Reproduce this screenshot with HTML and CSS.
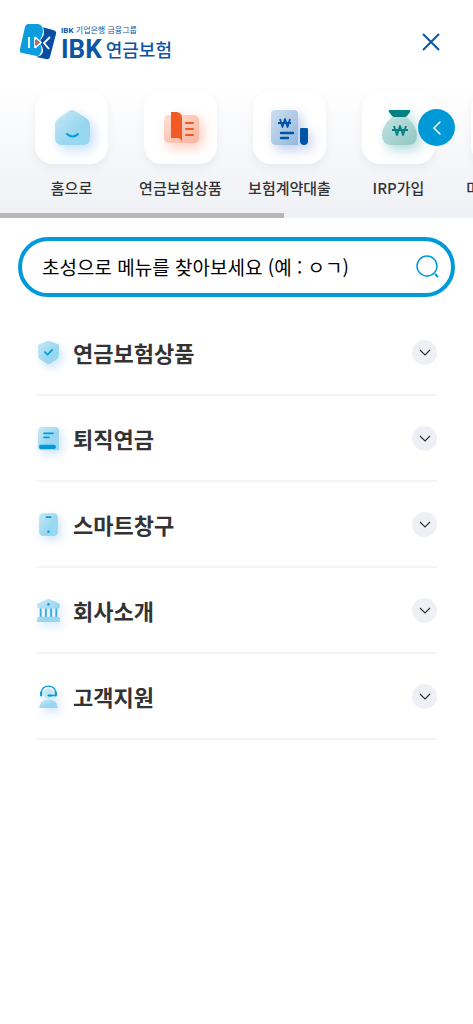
FILE: index.html
```html
<!DOCTYPE html>
<html lang="ko">
<head>
  <meta charset="UTF-8" />
  <title>IBK 연금보험</title>
  <meta name="viewport" content="width=device-width, initial-scale=1" />
  <link rel="stylesheet" href="styles.css">
</head>
<body>
  <header class="header">
    <a class="logo" href="#">
      <svg class="logo-mark" viewBox="0 0 38 38" aria-hidden="true">
        <path d="M9 1h10q5 1 5 7c0 5-3 7-3 11s3 6 1 10c-1 3-2 4-4 4L3 30q-3-1-2-4L6 4q1-3 3-3z" fill="#0b9ddd"/>
        <path d="M23 4l11 3q4 1 3 4l-6 23q-1 3-4 2l-10-2c5-1 7-3 7-7s-3-5-3-8 4-5 4-9-1-5-1-6z" fill="#0b4da2"/>
        <path d="M10 14v11M16 14v11" fill="none" stroke="#fff" stroke-width="1.800"/>
        <path d="M16 14l6 5.500-6 5.500" fill="none" stroke="#fff" stroke-width="1.500"/>
        <path d="M16 16.500l4 3-4 3z" fill="#f15a29"/>
        <path d="M31 14l-6 6 5 6" fill="none" stroke="#fff" stroke-width="1.800"/>
      </svg>
      <span class="logo-text">
        <span class="logo-group"><b>IBK</b> 기업은행 금융그룹</span>
        <span class="logo-name"><b>IBK</b> 연금보험</span>
      </span>
    </a>
    <button class="close-btn" aria-label="닫기">
      <svg width="18" height="18" viewBox="0 0 18 18" fill="none" stroke="#0b55a5" stroke-width="2"><path d="M1 1l16 16M17 1L1 17"/></svg>
    </button>
  </header>

  <nav class="quick">
    <div class="quick-list">
      <a class="quick-item" href="#">
        <span class="tile">
          <svg class="shadow-blue" width="40" height="40" viewBox="0 0 40 40">
            <defs>
              <linearGradient id="sky" x1="0" y1="0" x2="1" y2="1"><stop offset="0" stop-color="#c9e9f5"/><stop offset=".6" stop-color="#98d7f0"/></linearGradient>
            </defs>
            <path d="M17 3q3-2 6 0l11 7q4 3 4 7v13q0 7-7 7H10q-7 0-7-7V17q0-4 4-7z" fill="url(#sky)"/>
            <path d="M15 26q6 5 11 0" fill="none" stroke="#0099dc" stroke-width="2" stroke-linecap="round"/>
          </svg>
        </span>
        <span class="quick-label">홈으로</span>
      </a>
      <a class="quick-item" href="#">
        <span class="tile">
          <svg class="shadow-red" width="40" height="40" viewBox="0 0 40 40">
            <defs>
              <linearGradient id="peach" x1="0" y1="0" x2="1" y2="1"><stop offset="0" stop-color="#fddfd4"/><stop offset="1" stop-color="#f9b39d"/></linearGradient>
            </defs>
            <rect x="3" y="7" width="35" height="28" rx="5" fill="url(#peach)"/>
            <path d="M10 4h6q5 1 5 6v25q0-4-4-5h-7z" fill="#f15a24"/>
            <path d="M25 15h7M25 21h7M25 27h7" stroke="#f15a24" stroke-width="2" stroke-linecap="round"/>
          </svg>
        </span>
        <span class="quick-label">연금보험상품</span>
      </a>
      <a class="quick-item" href="#">
        <span class="tile">
          <svg class="shadow-navy" width="40" height="40" viewBox="0 0 40 40">
            <defs>
              <linearGradient id="steel" x1="0" y1="0" x2="1" y2="1"><stop offset="0" stop-color="#cddff0"/><stop offset="1" stop-color="#94b7da"/></linearGradient>
            </defs>
            <path d="M5 2h19q4 0 4 4v31H6q-5 0-5-5V6q0-4 4-4z" fill="url(#steel)"/>
            <path d="M31 20h6q1 0 1 1v12q0 4-4 4t-4-4V21q0-1 1-1z" fill="#0054a6"/>
            <path d="M10 11l2.500 8 2.500-8 2.500 8 2.500-8M8 15h13" fill="none" stroke="#0054a6" stroke-width="1.800" stroke-linejoin="round"/>
            <path d="M11 25h12M11 30h7" stroke="#0054a6" stroke-width="2.400" stroke-linecap="round"/>
          </svg>
        </span>
        <span class="quick-label">보험계약대출</span>
      </a>
      <a class="quick-item" href="#">
        <span class="tile">
          <svg class="shadow-teal" width="40" height="40" viewBox="0 0 40 40">
            <defs>
              <linearGradient id="mint" x1="0" y1="0" x2="1" y2="1"><stop offset="0" stop-color="#c5e3e0"/><stop offset="1" stop-color="#8ec6c2"/></linearGradient>
            </defs>
            <path d="M13 9h14q11 9 11 18 0 10-10 10H13Q3 37 3 27q0-9 10-18z" fill="url(#mint)"/>
            <path d="M11 2h19q2 0 1 2l-3 4q-1 1-2 1H15q-1 0-2-1l-3-4q-1-2 1-2z" fill="#008080"/>
            <path d="M15 18l3 9 3-9 3 9 3-9M13 22h16" fill="none" stroke="#008080" stroke-width="1.800" stroke-linejoin="round"/>
          </svg>
        </span>
        <span class="quick-label">IRP가입</span>
      </a>
      <a class="quick-item" href="#">
        <span class="tile"></span>
        <span class="quick-label">미청구보험금</span>
      </a>
    </div>
    <button class="quick-prev" aria-label="이전">
      <svg width="10" height="16" viewBox="0 0 10 16" fill="none" stroke="#fff" stroke-width="1.500" stroke-linecap="round"><path d="M8 2L2 8l6 6"/></svg>
    </button>
    <div class="quick-track"><div class="quick-thumb"></div></div>
  </nav>

  <main>
    <form class="search">
      <input type="text" id="keyword" aria-label="메뉴 검색" placeholder="초성으로 메뉴를 찾아보세요 (예 : ㅇㄱ)" />
      <button class="search-btn" type="button" aria-label="검색">
        <svg width="24" height="24" viewBox="0 0 24 24" fill="none" stroke="#0099dc" stroke-width="1.500"><circle cx="11" cy="11" r="10"/><path d="M19 19l3 3" stroke-width="2"/></svg>
      </button>
    </form>

    <ul class="menu">
      <li>
        <button class="menu-btn">
          <svg class="menu-icon" viewBox="0 0 24 24">
            <path d="M11 1q1-.500 2 0l8 3q1 .500 1 2v8q0 4-4 6l-5 3q-1 .500-2 0l-5-3q-4-2-4-6V6q0-1.500 1-2z" fill="url(#sky)"/>
            <path d="M8 11l3 3 5-5" fill="none" stroke="#0099dc" stroke-width="1.500"/>
          </svg>
          <span class="menu-name">연금보험상품</span>
          <span class="arrow"><svg width="12" height="8" viewBox="0 0 12 8"><path d="M1 2l5 5 5-5"/></svg></span>
        </button>
      </li>
      <li>
        <button class="menu-btn">
          <svg class="menu-icon" viewBox="0 0 24 24">
            <path d="M6 1h12q4 0 4 4v18H5q-3 0-3-3V5q0-4 4-4z" fill="url(#sky)"/>
            <path d="M7 7h10M7 11h6" stroke="#0099dc" stroke-width="1.600"/>
            <rect x="3" y="18" width="16" height="4" rx="1.500" fill="#0099dc"/>
          </svg>
          <span class="menu-name">퇴직연금</span>
          <span class="arrow"><svg width="12" height="8" viewBox="0 0 12 8"><path d="M1 2l5 5 5-5"/></svg></span>
        </button>
      </li>
      <li>
        <button class="menu-btn">
          <svg class="menu-icon" viewBox="0 0 24 24">
            <rect x="3" y="1" width="18" height="22" rx="4" fill="url(#sky)"/>
            <path d="M10 5h4" stroke="#0099dc" stroke-width="1.600" stroke-linecap="round"/>
            <circle cx="12" cy="19" r="1.200" fill="#0099dc"/>
          </svg>
          <span class="menu-name">스마트창구</span>
          <span class="arrow"><svg width="12" height="8" viewBox="0 0 12 8"><path d="M1 2l5 5 5-5"/></svg></span>
        </button>
      </li>
      <li>
        <button class="menu-btn">
          <svg class="menu-icon" viewBox="0 0 24 24">
            <path d="M4.500 9v10M9.500 9v10M14.500 9v10M19.500 9v10" stroke="#35afe2" stroke-width="1.800"/>
            <path d="M11 1.300q1-.500 2 0l8 3.200q2 .700 2 2.500v1q0 2-2 2H3q-2 0-2-2V7q0-1.800 2-2.500zM3 18h18q2 0 2 3v2H1v-2q0-3 2-3z" fill="url(#sky)"/>
            <circle cx="12" cy="6" r="1.200" fill="#0099dc"/>
          </svg>
          <span class="menu-name">회사소개</span>
          <span class="arrow"><svg width="12" height="8" viewBox="0 0 12 8"><path d="M1 2l5 5 5-5"/></svg></span>
        </button>
      </li>
      <li>
        <button class="menu-btn">
          <svg class="menu-icon" viewBox="0 0 24 24">
            <circle cx="12" cy="9" r="5" fill="#c2e6f4"/>
            <path d="M3 23q1-8 9-8t9 8z" fill="url(#sky)"/>
            <path d="M5 10V8q1-6 7-6t7 6v3h-6" fill="none" stroke="#0099dc" stroke-width="1.300" stroke-linejoin="round"/>
            <path d="M5 8v3M19 8v3M12 11h2" stroke="#0099dc" stroke-width="2" stroke-linecap="round"/>
          </svg>
          <span class="menu-name">고객지원</span>
          <span class="arrow"><svg width="12" height="8" viewBox="0 0 12 8"><path d="M1 2l5 5 5-5"/></svg></span>
        </button>
      </li>
    </ul>
  </main>
</body>
</html>
```

FILE: styles.css
```css
* {
  box-sizing: border-box;
}
body {
  margin: 0;
  background: #fff;
  color: #333;
  font-family: "Noto Sans CJK KR", "Noto Sans", sans-serif;
}
button {
  padding: 0;
  border: none;
  background: none;
  font-family: inherit;
  color: inherit;
  cursor: pointer;
}
svg {
  display: block;
}
a {
  color: inherit;
  text-decoration: none;
}

/* header */
.header {
  display: flex;
  justify-content: space-between;
  align-items: center;
  height: 84px;
  padding: 0 29px 0 19px;
}
.logo {
  display: flex;
  align-items: center;
  gap: 4px;
  color: #0b55a5;
}
.logo-mark {
  width: 38px;
  height: 38px;
}
.logo-text {
  display: flex;
  flex-direction: column;
}
.logo-group {
  font-size: 8px;
  line-height: 12px;
}
.logo-name {
  display: flex;
  align-items: center;
  gap: 4px;
  font-size: 18px;
  font-weight: 500;
  line-height: 24px;
}
.logo b {
  font-family: Roboto, sans-serif;
}
.logo-name b {
  font-size: 26px;
}
.close-btn {
  padding: 4px;
}

/* quick menu */
.quick {
  position: relative;
  background: linear-gradient(#fff, #eef0f5);
}
.quick-list {
  display: flex;
  padding: 7px 17px 13px;
  overflow-x: auto;
  scrollbar-width: none;
}
.quick-item {
  flex: 0 0 109px;
  display: flex;
  flex-direction: column;
  align-items: center;
  gap: 12px;
}
.tile {
  display: flex;
  justify-content: center;
  align-items: center;
  width: 73px;
  height: 73px;
  border-radius: 18px;
  background: #fff;
  box-shadow: 0 4px 10px rgba(0, 0, 0, 0.05);
}
.quick-label {
  font-size: 15px;
  font-weight: 500;
  line-height: 24px;
  white-space: nowrap;
}
.shadow-blue {
  filter: drop-shadow(4px 5px 6px rgba(60, 150, 230, 0.3));
}
.shadow-red {
  filter: drop-shadow(4px 5px 6px rgba(255, 90, 50, 0.3));
}
.shadow-navy {
  filter: drop-shadow(4px 5px 6px rgba(50, 90, 200, 0.3));
}
.shadow-teal {
  filter: drop-shadow(4px 5px 6px rgba(0, 128, 128, 0.3));
}
.quick-prev {
  position: absolute;
  top: 25px;
  right: 18px;
  display: flex;
  justify-content: center;
  align-items: center;
  width: 37px;
  height: 37px;
  border-radius: 50%;
  background: #0099d8;
}
.quick-track {
  height: 5px;
}
.quick-thumb {
  width: 60%;
  height: 100%;
  background: #b7b7b9;
}

/* search */
.search {
  display: flex;
  align-items: center;
  height: 60px;
  margin: 19px 18px 13px;
  padding: 0 11px 0 20px;
  border: 4px solid #0099dc;
  border-radius: 30px;
}
.search input {
  flex: 1;
  min-width: 0;
  padding: 0;
  border: none;
  outline: none;
  background: none;
  font-family: inherit;
  font-size: 19px;
  line-height: 30px;
  color: #000;
}
.search input::placeholder {
  color: #000;
  opacity: 1;
}

/* accordion menu */
.menu {
  margin: 0;
  padding: 0 36px;
  list-style: none;
}
.menu li {
  border-bottom: 2px solid #f3f4f6;
}
.menu-btn {
  display: flex;
  align-items: center;
  width: 100%;
  height: 84px;
}
.menu-icon {
  width: 25px;
  height: 25px;
  filter: drop-shadow(3px 4px 4px rgba(60, 150, 230, 0.25));
}
.menu-name {
  flex: 1;
  margin-left: 12px;
  font-size: 22px;
  font-weight: 700;
  line-height: 32px;
  text-align: left;
}
.arrow {
  display: flex;
  justify-content: center;
  align-items: center;
  width: 25px;
  height: 25px;
  border-radius: 50%;
  background: #eff0f5;
}
.arrow path {
  fill: none;
  stroke: #333;
  stroke-width: 1.2;
}
```
